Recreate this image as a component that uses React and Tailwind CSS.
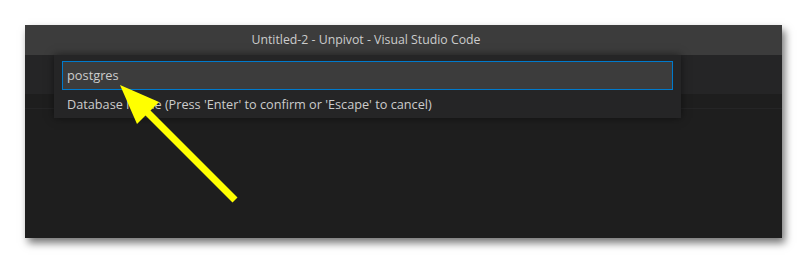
import React from "react";

export default function App() {
  const font = { fontFamily: '"Segoe UI", "Open Sans", "Noto Sans", sans-serif' };
  return (
    <div className="w-[807px] h-[263px] bg-white pt-[25px] pl-[25px] relative" style={font}>
      <div className="relative w-[757px] h-[213px] bg-[#1e1e1e] flex flex-col shadow-[3px_5px_8px_rgba(0,0,0,0.55)]">
        <div className="h-[30px] bg-[#3c3c3c] flex items-center justify-center text-[12.3px] text-[#cccccc] pr-[75px]">
          Untitled-2 - Unpivot - Visual Studio Code
        </div>
        <div className="h-[39px] bg-[#252526]" />
        <div className="h-[15px] bg-[#1e1e1e] border-b border-[#252526]" />
        <div className="flex-1 bg-[#1e1e1e]" />

        <div className="absolute left-[29px] top-[30px] w-[627px] h-[63px] bg-[#252526] shadow-[0_0_8px_rgba(0,0,0,0.5)] px-[8px] pt-[6px] flex flex-col">
          <div className="h-[29px] bg-[#3c3c3c] border border-[#007acc] flex items-center pl-[4px] text-[12.8px] text-[#cccccc]">
            postgres
          </div>
          <div className="pl-[5px] pt-[4px] text-[12.7px] text-[#cccccc] leading-[20px]">
            Database Name (Press 'Enter' to confirm or 'Escape' to cancel)
          </div>
        </div>
      </div>

      <svg className="absolute left-0 top-0 pointer-events-none" width="807" height="263" viewBox="0 0 807 263">
        <line x1="235" y1="200" x2="145" y2="110" stroke="#ffff00" strokeWidth="7" />
        <polygon points="120,85 159,102 137,124" fill="#ffff00" />
      </svg>
    </div>
  );
}
